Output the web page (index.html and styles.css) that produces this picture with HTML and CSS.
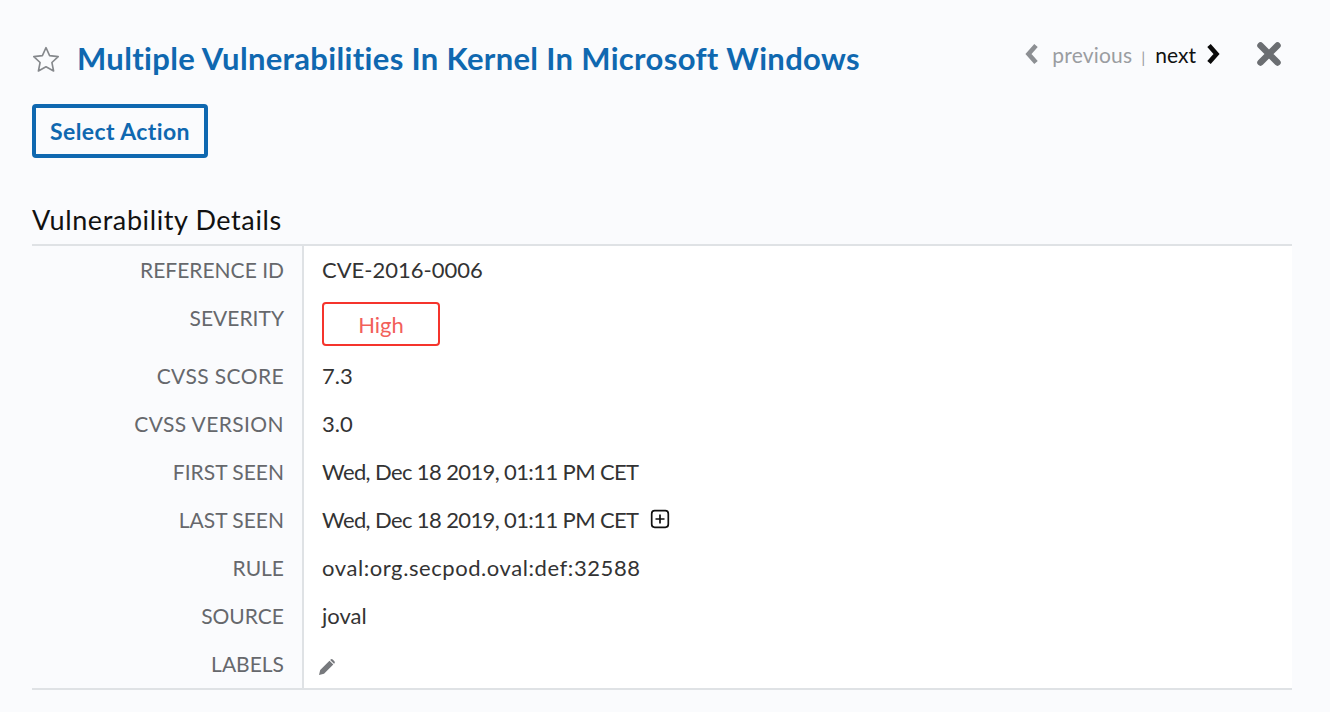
FILE: index.html
```html
<!DOCTYPE html>
<html lang="en">
<head>
  <meta charset="UTF-8">
  <title>Vulnerability Details</title>
  <link rel="stylesheet" href="styles.css">
</head>
<body>
  <div class="panel">
    <div class="header">
      <svg class="star" width="28" height="26" viewBox="0 0 28 26"><path d="M14 1.700l3.600 7.900 8.600 1-6.300 5.900 1.700 8.500-7.600-4.300-7.600 4.300 1.700-8.500L1.800 10.600l8.600-1z" fill="none" stroke="#85888c" stroke-width="1.600" stroke-linejoin="round"/></svg>
      <h1>Multiple Vulnerabilities In Kernel In Microsoft Windows</h1>
      <div class="pager">
        <svg width="16" height="22" viewBox="0 0 16 22"><path d="M12 2.500L4.500 11l7.500 8.500" fill="none" stroke="#8c8f93" stroke-width="4.600"/></svg>
        <span class="prev">previous</span>
        <span class="sep">|</span>
        <span class="next">next</span>
        <svg width="16" height="22" viewBox="0 0 16 22"><path d="M4 2.500L11.500 11 4 19.500" fill="none" stroke="#0a0a0a" stroke-width="4.600"/></svg>
      </div>
      <svg class="close" width="26" height="26" viewBox="0 0 26 26"><path d="M4.500 4.500l17 17M21.500 4.500l-17 17" fill="none" stroke="#6b6e72" stroke-width="6.500" stroke-linecap="round"/></svg>
    </div>

    <button class="action">Select Action</button>

    <h2>Vulnerability Details</h2>
    <div class="details">
      <div class="label">REFERENCE ID</div><div class="value">CVE-2016-0006</div>
      <div class="label label-tall">SEVERITY</div><div class="value sev"><span class="badge">High</span></div>
      <div class="label label-cvss">CVSS SCORE</div><div class="value">7.3</div>
      <div class="label label-cvss">CVSS VERSION</div><div class="value">3.0</div>
      <div class="label">FIRST SEEN</div><div class="value date">Wed, Dec 18 2019, 01:11 PM CET</div>
      <div class="label">LAST SEEN</div>
      <div class="value"><span class="date">Wed, Dec 18 2019, 01:11 PM CET</span>
        <svg class="plus" width="20" height="20" viewBox="0 0 20 20"><rect x="1.700" y="1.700" width="16.600" height="16.600" rx="3" fill="none" stroke="#111" stroke-width="1.700"/><path d="M10 5.500v9M5.500 10h9" stroke="#111" stroke-width="1.700"/></svg>
      </div>
      <div class="label">RULE</div><div class="value rule">oval:org.secpod.oval:def:32588</div>
      <div class="label">SOURCE</div><div class="value">joval</div>
      <div class="label">LABELS</div>
      <div class="value">
        <svg class="pencil" width="18" height="18" viewBox="0 0 18 18"><path d="M1 17l1.200-5L11.500 2.700l3.800 3.800L6 15.800zM12.600 1.600a1.500 1.500 0 0 1 2.100 0l1.700 1.700a1.500 1.500 0 0 1 0 2.100l-.4.400-3.800-3.800z" fill="#77797d"/></svg>
      </div>
    </div>
  </div>
</body>
</html>
```

FILE: styles.css
```css
body {
  margin: 0;
  font-family: "Lato", "Liberation Sans", sans-serif;
  background-color: #fafbfd;
  color: #222;
}
.panel {
  padding: 36px 38px 22px 32px;
}
.header {
  display: flex;
  align-items: center;
  height: 46px;
}
.star {
  margin-right: 17px;
}
h1 {
  flex: 1;
  margin: -2px 0 0;
  font-size: 31px;
  font-weight: 700;
  letter-spacing: 0.33px;
  color: #0f68b0;
}
.pager {
  display: flex;
  align-items: center;
  gap: 9px;
  font-size: 21px;
  margin: -10px 35px 0 0;
}
.pager svg:first-child {
  margin-right: 3px;
}
.prev {
  color: #9a9da1;
  letter-spacing: 0.2px;
}
.sep {
  color: #9a9da1;
  font-size: 16px;
  margin: 4px 1px 0 0;
}
.next {
  color: #111;
}
.close {
  margin: -10px 10px 0 0;
}
.action {
  display: block;
  width: 176px;
  height: 54px;
  margin-top: 22px;
  background: transparent;
  border: 4px solid #0f68b0;
  border-radius: 4px;
  color: #0f68b0;
  font-family: inherit;
  font-size: 23px;
  font-weight: 700;
  letter-spacing: 0.4px;
  padding: 0;
}
h2 {
  margin: 42px 0 0;
  height: 44px;
  font-size: 27px;
  font-weight: 400;
  letter-spacing: 0.6px;
  line-height: 40px;
  color: #111;
}
.details {
  display: grid;
  grid-template-columns: 272px 1fr;
  border-top: 2px solid #dfe2e5;
  border-bottom: 2px solid #dfe2e5;
}
.label {
  padding-right: 18px;
  border-right: 2px solid #dfe2e5;
  height: 48px;
  line-height: 48px;
  text-align: right;
  font-size: 21px;
  color: #66686c;
}
.label-tall {
  height: 58px;
}
.label-cvss {
  letter-spacing: 0.4px;
}
.value {
  height: 48px;
  padding-left: 18px;
  background: #fff;
  line-height: 48px;
  font-size: 22px;
  color: #333;
}
.sev {
  height: 58px;
  line-height: normal;
}
.date {
  letter-spacing: -0.62px;
}
.rule {
  letter-spacing: 0.57px;
}
.badge {
  display: block;
  box-sizing: border-box;
  width: 118px;
  height: 44px;
  margin-top: 8px;
  border: 2px solid #f5342c;
  border-radius: 4px;
  text-align: center;
  line-height: 42px;
  color: #f2605a;
}
.plus {
  vertical-align: -1px;
  margin-left: 6px;
}
.pencil {
  vertical-align: -4px;
  margin-left: -4px;
}
```
